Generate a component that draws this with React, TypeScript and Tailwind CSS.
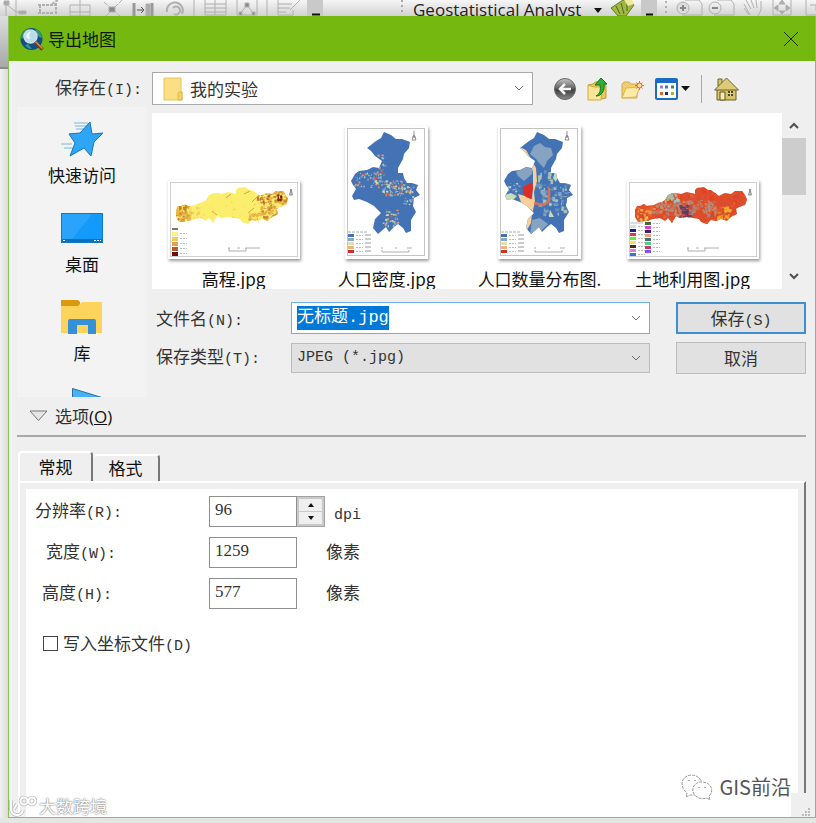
import { useEffect, useRef, useState, type ReactNode } from 'react'

const WIDE_OUTLINE =
  'M8 30 L10 26 L13 26 L17 24 L20 26 L27 25 L31 23 L35 22 L38 20 L41 15 L46 13 L50 13 L54 14 L60 12 L68 14 L68 10 L70 8 L77 7 L81 10 L84 10 L88 13 L92 16 L98 13 L104 14 L108 11 L115 11 L118 15 L120 19 L118 25 L112 27 L109 29 L110 34 L104 37 L100 41 L94 39 L89 41 L84 40 L80 44 L74 42 L72 39 L66 38 L60 37 L53 38 L49 36 L45 43 L41 38 L38 41 L33 38 L26 39 L20 41 L11 42 L8 37 Z'
const TALL_OUTLINE =
  'M39 6 L46 9 L51 13 L57 13 L65 16 L64 22 L59 28 L58 33 L53 42 L53 47 L58 47 L59 52 L62 57 L67 57 L73 59 L71 64 L75 69 L69 72 L68 80 L71 86 L66 94 L66 105 L61 107 L58 102 L53 98 L49 101 L44 106 L41 101 L33 108 L28 102 L30 93 L36 87 L29 80 L22 76 L14 73 L9 74 L7 70 L11 63 L8 59 L6 55 L10 48 L14 45 L22 44 L28 41 L34 42 L37 35 L30 30 L26 25 L22 22 L31 15 L36 12 Z'

type Spot = { x: number; y: number; w: number; h: number; color: string }

function scatter(seed: number, count: number, box: number[], size: number, colors: string[]): Spot[] {
  let s = seed * 7919
  const next = () => {
    s = (s * 16807) % 2147483647
    return s / 2147483647
  }
  return Array.from({ length: count }, () => ({
    x: box[0] + next() * box[2],
    y: box[1] + next() * box[3],
    w: 0.8 + next() * size,
    h: 0.8 + next() * size,
    color: colors[Math.floor(next() * colors.length)],
  }))
}

const DENSITY = ['#e8dcae', '#f0a070', '#9fb8c4', '#d9653d', '#c9d8b0', '#4473b5', '#86a9c8']
const SPOTS = {
  elevation: [
    ...scatter(11, 80, [7, 24, 14, 18], 3, ['#d99a35', '#e9b64f', '#c77a25', '#e2a83f']),
    ...scatter(19, 25, [18, 26, 14, 14], 3, ['#e9b64f', '#f6d960']),
    ...scatter(23, 170, [92, 10, 28, 32], 3, ['#e0a040', '#d08a32', '#e8b450', '#c8782a']),
    ...scatter(29, 30, [80, 32, 14, 12], 3, ['#e9b64f', '#d99a35']),
    ...scatter(31, 24, [30, 22, 60, 18], 2, ['#f4cf58', '#fbe36a']),
    ...scatter(71, 18, [88, 14, 12, 8], 2, ['#a8541c', '#c0702a']),
    ...scatter(37, 12, [108, 14, 6, 5], 2, ['#6b1208', '#8b2b10']),
  ],
  density: [
    ...scatter(41, 110, [36, 54, 22, 15], 2, DENSITY),
    ...scatter(43, 70, [8, 46, 27, 15], 2, DENSITY),
    ...scatter(47, 30, [31, 28, 8, 26], 2, DENSITY),
    ...scatter(53, 36, [37, 82, 16, 18], 2, DENSITY),
    ...scatter(59, 26, [58, 60, 10, 18], 2, DENSITY),
  ],
  count: [
    ...scatter(61, 120, [38, 44, 36, 44], 4, ['#8aa9c0', '#6f96bd', '#4473b5', '#9db8bd', '#5d86ba', '#b9cdb8']),
    ...scatter(67, 16, [8, 56, 14, 12], 3, ['#c9dcb8', '#8aa9c0', '#5d86ba']),
  ],
  landuse: [
    ...scatter(73, 260, [6, 6, 115, 38], 4, ['#e2401f', '#f0532a', '#d6452f', '#e9652c', '#d9533c']),
    ...scatter(79, 150, [22, 20, 66, 14], 3, ['#a98b7c', '#c98d6a', '#9c8f8c', '#c8976c', '#b5797e']),
    ...scatter(83, 36, [36, 10, 14, 10], 3, ['#8ecfd4', '#a5c7b0', '#c9b46a']),
    ...scatter(89, 34, [52, 24, 12, 12], 3, ['#6a3564', '#8b4a6e', '#4d3b68', '#b05a45']),
    ...scatter(97, 26, [90, 26, 12, 12], 3, ['#f2a72b', '#f5b431']),
    ...scatter(101, 24, [10, 28, 12, 12], 3, ['#f0a23a', '#e5cf5a', '#e2682f']),
  ],
}

function Spots({ spots }: { spots: Spot[] }) {
  return (
    <>
      {spots.map((s, i) => (
        <rect key={i} x={s.x} y={s.y} width={s.w} height={s.h} fill={s.color} rx="0.8" opacity="0.85" />
      ))}
    </>
  )
}

function Legend({ x, y, step, colors }: { x: number; y: number; step: number; colors: string[] }) {
  return (
    <>
      {colors.map((c, i) => (
        <g key={i}>
          <rect x={x} y={y + i * step} width="6" height={step - 1} fill={c} />
          <path d={`M${x + 8} ${y + i * step + 1.5}h7`} stroke="#bbb" strokeDasharray="2 1" />
        </g>
      ))}
    </>
  )
}

function WideMap({ kind }: { kind: 'elevation' | 'landuse' }) {
  const elevation = kind === 'elevation'
  return (
    <svg width="132" height="79" viewBox="0 0 132 79" aria-hidden="true">
      <rect x="2.5" y="2.5" width="127" height="74" fill="none" stroke="#cfcfcf" />
      <clipPath id={kind}>
        <path d={WIDE_OUTLINE} />
      </clipPath>
      <g clipPath={`url(#${kind})`}>
        <rect width="132" height="79" fill={elevation ? '#fbee6c' : '#dd4d2b'} />
        <Spots spots={SPOTS[kind]} />
        {elevation && (
          <path d="M84 22l7-7M58 18l5-4M76 14l6-3M80 33l6-5M44 31l5 4" stroke="#dba03a" />
        )}
      </g>
      <path d="M123 15V9M121.5 15l1.5-6 1.5 6z" stroke="#777" strokeWidth="0.8" fill="none" />
      {elevation ? (
        <>
          <path d="M4 49h6" stroke="#777" strokeWidth="2" />
          <Legend x={4} y={52} step={5} colors={['#fdf27d', '#f5c95c', '#e4a04a', '#b35c25', '#6e0f12']} />
        </>
      ) : (
        <>
          <path d="M3 43h13" stroke="#bbb" />
          <Legend x={3} y={45} step={4} colors={['#c5e6ea', '#1c1c9c', '#e23b2e', '#5cf23a', '#eee25c', '#4a2a18', '#e27fd0', '#3c76c8']} />
          <Legend x={18} y={42} step={4} colors={['#3f6b35', '#d93fe0', '#4a1c5c', '#e0a28a', '#4f6f66', '#4fce8a', '#c43a72', '#8a4ff0']} />
        </>
      )}
      <path d="M61 68v3h17v-3M60 68h2M69 68h3M77 68h15" stroke="#9a9a9a" strokeWidth="0.8" fill="none" />
    </svg>
  )
}

function TallMap({ kind }: { kind: 'density' | 'count' }) {
  return (
    <svg width="83" height="133" viewBox="0 0 83 133" aria-hidden="true">
      <rect x="2.5" y="2.5" width="77" height="127" fill="none" stroke="#c4c4c4" />
      <clipPath id={kind}>
        <path d={TALL_OUTLINE} />
      </clipPath>
      <g clipPath={`url(#${kind})`}>
        <rect width="83" height="133" fill="#4473b5" />
        {kind === 'count' && (
          <>
            <path d="M36 20l6-3 5 4 6 1 2 7-6 6-3 7-4-4-4-5-6-5z" fill="#86a3c2" />
            <path d="M18 46l10-5 7 2-1 5-8 7-6-5z" fill="#86a3c2" />
            <path d="M34 94l8-2 8 6-8 8-10 3z" fill="#86a3c2" />
          </>
        )}
        <Spots spots={SPOTS[kind]} />
        {kind === 'count' && (
          <>
            <path d="M22 21 L28 24 L33 33 L38 42 L39 55 L36 66 L37 76 L34 88 L33 97 L29 104 L26 100 L30 90 L34 84 L24 79 L20 68 L27 70 L34 73 L35 60 L35 45 L29 32 Z" fill="#f8cf9b" />
            <path d="M25 61 L34 56 L35 62 L33 73 L28 71 L25 67 Z" fill="#dd2d26" />
            <path d="M36 77l10 2 5-4V62" stroke="#dc7057" strokeWidth="2.5" fill="none" />
            <path d="M7 69l6-2 6 3-5 5-7-1zM52 84l4 7h-5zM57 46l3 4-2 6-3-4z" fill="#c9dcb8" />
          </>
        )}
      </g>
      <path d="M69 10V5M67 14l2-5 2 5zM67 11h4" stroke="#777" strokeWidth="0.8" fill="none" />
      <path d="M3 106h20" stroke="#aaa" strokeDasharray="3 1" />
      <Legend x={3} y={108} step={4} colors={['#4473b5', '#86a9c8', '#e2e2b0', '#f3b37c', '#d42c2c']} />
      <path d="M23 108v19" stroke="#ccc" strokeWidth="6" strokeDasharray="2 2" />
      <path d="M37 124v2h27v-2M36 122h2M50 122h2M62 122h5" stroke="#9a9a9a" strokeWidth="0.8" fill="none" />
    </svg>
  )
}

const FILES = [
  { name: '高程.jpg', picture: <WideMap kind="elevation" /> },
  { name: '人口密度.jpg', picture: <TallMap kind="density" /> },
  { name: '人口数量分布图.', picture: <TallMap kind="count" /> },
  { name: '土地利用图.jpg', picture: <WideMap kind="landuse" /> },
]

function Chevron({ up = false, bold = false }: { up?: boolean; bold?: boolean }) {
  return (
    <svg width="10" height="7" viewBox="0 0 10 7" fill="none" aria-hidden="true" className="pointer-events-none">
      <path d={up ? 'M1 6l4-4 4 4' : 'M1 1l4 4 4-4'} stroke={bold ? '#505050' : '#6b6b6b'} strokeWidth={bold ? 2 : 1} />
    </svg>
  )
}

// 括号里的快捷键，半角等宽
function Key({ children }: { children: ReactNode }) {
  return <span className="font-['Liberation_Mono',monospace] text-[15px] leading-none">{children}</span>
}

function BackgroundToolbar() {
  return (
    <div aria-hidden="true" className="flex h-4 items-start overflow-hidden bg-gradient-to-b from-[#f6f6f6] to-[#d2d2d2]">
      <svg width="400" height="16" viewBox="0 0 400 16" fill="none" stroke="#b0b0b0" className="shrink-0">
        <path d="M6 3v13M6 4l10 8M16 0v16M16 12h10" />
        <path d="M4 1h5v4H4zM19 11h7v3h-7z" fill="#aaa" />
        <path d="M38 5h18M40 5v9M38 13h16M56 3v11M52 4l6-4" strokeDasharray="3 1" strokeWidth="2" />
        <path d="M70 5h20v11H70zM80 0v16M70 12h20" />
        <path d="M106 16l16-16M104 2l16 14" strokeDasharray="5 1" />
        <path d="M109 7h6v5h-6z" fill="#888" />
        <path d="M134 3v13M152 3v13" strokeWidth="3" stroke="#999" />
        <path d="M137 10h7M141 7l3 3-3 3" stroke="#555" />
        <path d="M146 4h4v12h-4z" fill="#aaa" />
        <path d="M167 12a8 8 0 1 1 15 2M174 14a4 4 0 1 0-1-6" strokeWidth="2" />
        <path d="M194 0v16M267 0v16" />
        <path d="M205 0v15h21V0M205 4h21M205 8h21M205 12h21M215 0v15" />
        <path d="M237 0v15h20V0M240 14l7-9 7 9" />
        <path d="M245 3h4v4h-4zM239 12h3v3h-3zM252 12h3v3h-3z" fill="#888" />
        <path d="M278 0v15h15v-5M278 4h14M278 8h12M278 12h8M290 10l10-10" />
        <path d="M307 0h16v16h-16z" fill="#c9c9c9" stroke="none" />
        <path d="M312 14.500h8" stroke="#111" strokeWidth="2" />
      </svg>
      <svg width="13" height="16" viewBox="0 0 13 16" className="shrink-0" fill="#aaa">
        <path d="M1 0h2v2H1zM1 5h2v2H1zM1 10h2v2H1z" />
      </svg>
      <span className="w-[167px] shrink-0 whitespace-nowrap font-['Open_Sans',sans-serif] text-[17px] leading-5 text-[#222]">
        Geostatistical Analyst
      </span>
      <svg width="236" height="16" viewBox="0 0 236 16" fill="none" stroke="#b0b0b0" className="shrink-0">
        <path d="M14 8h8l-4 5z" fill="#111" stroke="none" />
        <path d="M31 8l12-8 11 5-8 11h-8z" fill="#a2b746" stroke="#647b1e" />
        <path d="M36 6l4 8M41 3l3 11M47 2v9" stroke="#4c661b" />
        <path d="M44 0h8l2 4-6 2z" fill="#f0e89a" stroke="none" />
        <path d="M61 0h16v16H61z" fill="#c9c9c9" stroke="none" />
        <path d="M66 14.500h7" stroke="#111" strokeWidth="2" />
        <path d="M86 1v13" strokeWidth="2" strokeDasharray="2 3" />
        <path d="M105 0h14l3 4v11h-20M137 0h14l3 4v11h-20" />
        <circle cx="103" cy="8" r="6" fill="#ddd" />
        <path d="M100 8h6M103 5v6M132 8h6" strokeWidth="2" stroke="#888" />
        <circle cx="135" cy="8" r="6" />
        <path d="M164 4l6 11M166 0l5 9M171 0l3 8M176 0l1 8M181 1v9l-3 6M164 8l5 7" />
        <path d="M193 0v15h18V0" />
        <path d="M202 0l3 4h-6zM202 14l3-3h-6zM194 8l4-3v6zM210 8l-4-3v6z" fill="#aaa" />
        <path d="M226 0v15h10M230 5h6v6" />
      </svg>
    </div>
  )
}

function TitleBar() {
  return (
    <header className="flex h-[45px] items-center bg-[#75b80f] pr-4 pl-[11px]">
      <svg width="24" height="24" viewBox="0 0 24 24" aria-hidden="true">
        <circle cx="11.500" cy="12" r="11" fill="#124f86" />
        <path d="M1 12a11 11 0 0 1 7-10l2 2-3 5-4 2zM5 18l3-1 4 5c-3 0-6-2-7-4zM15 2c4 1 7 5 7 9l-3-1-3-4z" fill="#2e9a8a" />
        <circle cx="10.500" cy="9.500" r="6.500" fill="#b8dcec" stroke="#cfdfe6" strokeWidth="1.500" />
        <path d="M6 9a5 5 0 0 1 5-4c-2 2-2 4-1 7-2 0-4-1-4-3z" fill="#e8f7fb" />
        <path d="M15 15l7.500 7.500" stroke="#7a3c18" strokeWidth="3.500" />
        <path d="M15.500 14.500l7 7" stroke="#d98c4c" strokeWidth="1.500" />
      </svg>
      <h1 className="ml-1 flex-1 text-[17px] leading-6 text-[#0c1a05]">导出地图</h1>
      <button type="button" aria-label="关闭">
        <svg width="16" height="16" viewBox="0 0 16 16" stroke="#1c2d08">
          <path d="M1 1l14 14M15 1L1 15" />
        </svg>
      </button>
    </header>
  )
}

function FolderTools() {
  return (
    <div className="flex h-8 shrink-0 items-center">
      <button type="button" aria-label="后退" className="w-[34px]">
        <svg width="24" height="24" viewBox="0 0 24 24">
          <defs>
            <linearGradient id="ball" x2="0" y2="1">
              <stop stopColor="#c6c6c6" />
              <stop offset="0.45" stopColor="#656565" />
              <stop offset="0.55" stopColor="#3f3f3f" />
              <stop offset="1" stopColor="#8c8c8c" />
            </linearGradient>
          </defs>
          <circle cx="12" cy="12" r="10.500" fill="url(#ball)" stroke="#666" />
          <path d="M18 12H8M12 7l-5 5 5 5" fill="none" stroke="#f4f4f4" strokeWidth="2.500" />
        </svg>
      </button>
      <button type="button" aria-label="上一级" className="w-[34px]">
        <svg width="22" height="24" viewBox="0 0 22 24">
          <path d="M1 8l5-1 2-2h9l2 3v13l-4 1z" fill="#e9c75c" stroke="#c59b34" />
          <path d="M1 8l6 2h8l-1 13H1z" fill="#fbe596" stroke="#d1aa45" />
          <path d="M9 19c4-2 5-6 4-11H8l6-7 6 6h-3c1 6-2 12-8 12z" fill="#2eae35" stroke="#13761c" />
        </svg>
      </button>
      <button type="button" aria-label="新建文件夹" className="w-[34px]">
        <svg width="24" height="24" viewBox="0 0 24 24">
          <path d="M1 7l2-2h5l2 2h6v14H1z" fill="#efcf6d" stroke="#d2aa49" />
          <path d="M1 21l4-10 14-1-4 10z" fill="#fdeaa6" stroke="#dcb452" />
          <path d="M18.500 4v9M14 8.500h9M15.500 5.500l6 6M21.500 5.500l-6 6" stroke="#f0683a" />
          <circle cx="18.500" cy="8.500" r="2.500" fill="#ffd9a0" stroke="#f0632b" />
        </svg>
      </button>
      <button type="button" aria-label="视图" className="flex w-[46px] items-center gap-[3px]">
        <svg width="23" height="22" viewBox="0 0 23 22">
          <rect x="1" y="1" width="21" height="20" rx="1" fill="#fff" stroke="#1c6cc4" strokeWidth="2" />
          <path d="M1 1h21v4H1z" fill="#1c6cc4" />
          <path d="M5 7.500h3v3H5z" fill="#8e86c8" />
          <path d="M10 7.500h3v3h-3z" fill="#3b77d0" />
          <path d="M16 7.500h3v3h-3z" fill="#2c9448" />
          <path d="M5 14h3v3H5z" fill="#e0662b" />
          <path d="M10 14h3v3h-3z" fill="#202f7c" />
          <path d="M16 14h3v3h-3z" fill="#c0a52a" />
        </svg>
        <svg width="9" height="5" viewBox="0 0 9 5">
          <path d="M0 0h9L4.500 5z" fill="#111" />
        </svg>
      </button>
      <span className="mr-3 h-7 w-px bg-[#a8a8a8]" />
      <button type="button" aria-label="主页">
        <svg width="25" height="24" viewBox="0 0 25 24">
          <path d="M4 2h4v7H4z" fill="#d8c56c" stroke="#6f6225" />
          <path d="M3 12h19v11H3z" fill="#d6c268" stroke="#6f6225" />
          <path d="M0.500 13L12.500 1l12 12z" fill="#dccb78" stroke="#6f6225" />
          <path d="M6 15h5v8H6z" fill="#f4eab2" stroke="#62551b" />
          <path d="M14 14h5v5h-5z" fill="#4a4a30" />
          <path d="M16.500 14v5M14 16.500h5" stroke="#e4d58a" />
        </svg>
      </button>
    </div>
  )
}

const PLACES = [
  {
    name: '快速访问',
    icon: (
      <svg width="44" height="36" viewBox="0 0 44 36">
        <path d="M14 2h14M15 5h12M16 8h11M1 23h11M4 27h9M9 13h8" stroke="#54a7dd" strokeWidth="0.8" />
        <path d="M30 1l2 12 11-1-9 9-3 14-7-8-14 8 5-13-6-9 11-1z" fill="#2ea5f5" stroke="#1577bd" />
      </svg>
    ),
  },
  {
    name: '桌面',
    icon: (
      <svg width="42" height="36" viewBox="0 0 42 36">
        <rect x="0.5" y="3.5" width="41" height="29" fill="#149afa" stroke="#0d78cc" />
        <path d="M1 4h30L11 29H1z" fill="#38acfc" opacity="0.6" />
        <path d="M1 29h40v3H1z" fill="#0b6fbe" />
        <path d="M2 30.500h2M33 30.500h2M36 30.500h2M39 30.500h1" stroke="#fff" />
      </svg>
    ),
  },
  {
    name: '库',
    icon: (
      <svg width="42" height="36" viewBox="0 0 42 36">
        <path d="M0 1h17l2 2v4H0z" fill="#d99b0c" />
        <path d="M0 7h17l4-4h20v31H0z" fill="#fdd35c" />
        <path d="M7 35V22q0-2 2-2h24q2 0 2 2v13h-8v-9H16v9z" fill="#3490d9" />
      </svg>
    ),
  },
]

function PlacesBar() {
  return (
    <nav className="flex h-[290px] w-[130px] shrink-0 flex-col gap-[23px] overflow-hidden bg-[#f3f3f3] pt-[14px]">
      {PLACES.map(place => (
        <button key={place.name} type="button" className="flex shrink-0 flex-col items-center gap-[6px] text-[17px] leading-6">
          <span className="flex h-9">{place.icon}</span>
          {place.name}
        </button>
      ))}
      <button type="button" aria-label="此电脑" className="shrink-0 pl-[55px]">
        <svg width="40" height="30" viewBox="0 0 40 30">
          <path d="M0.500 0.500L38 12v17H0.500z" fill="#45b3f5" stroke="#2d6f9c" />
        </svg>
      </button>
    </nav>
  )
}

function FileList() {
  return (
    <div className="flex h-[176px]">
      <ul className="flex min-w-0 flex-1 overflow-hidden bg-white pl-[5px]">
        {FILES.map(file => (
          <li key={file.name} className="flex w-[153px] shrink-0 flex-col items-center justify-end text-[17px] leading-5">
            <span className="bg-white shadow-[1px_2px_3px_rgba(0,0,0,0.4)]">{file.picture}</span>
            <span className="mt-[10px] whitespace-nowrap">{file.name}</span>
          </li>
        ))}
      </ul>
      <div className="flex w-6 flex-col items-center">
        <button type="button" aria-label="向上滚动" className="flex h-[25px] items-center">
          <Chevron up bold />
        </button>
        <div className="h-[57px] w-full bg-[#cdcdcd]" />
        <button type="button" aria-label="向下滚动" className="mt-auto flex h-[26px] items-center">
          <Chevron bold />
        </button>
      </div>
    </div>
  )
}

function NameFields() {
  const nameInput = useRef<HTMLInputElement>(null)
  const [name, setName] = useState('无标题.jpg')

  useEffect(() => {
    nameInput.current?.focus()
    nameInput.current?.select()
  }, [])

  return (
    <div className="mt-[13px] flex flex-col gap-2 text-[#333]">
      <div className="flex h-8 items-center">
        <label htmlFor="file-name" className="w-[139px] shrink-0 pl-1">
          文件名<Key>(N):</Key>
        </label>
        <div className="flex h-8 min-w-0 flex-1 items-center border border-[#6fb0e4] bg-white pr-2 pl-[5px]">
          <input
            ref={nameInput}
            id="file-name"
            value={name}
            onChange={e => setName(e.target.value)}
            className="h-6 min-w-0 flex-1 font-['Liberation_Mono','Noto_Sans_CJK_SC',monospace] leading-6 caret-transparent outline-none selection:bg-[#0078d7] selection:text-white"
          />
          <Chevron />
        </div>
        <button type="submit" className="ml-[26px] h-8 w-[130px] shrink-0 border-2 border-[#3d8fd1] bg-[#e1e1e1]">
          保存<Key>(S)</Key>
        </button>
      </div>
      <div className="flex h-8 items-center">
        <label htmlFor="file-type" className="w-[139px] shrink-0 pb-1 pl-1">
          保存类型<Key>(T):</Key>
        </label>
        <div className="flex h-[30px] min-w-0 flex-1 items-center border border-[#bcbcbc] bg-[#e1e1e1] pr-2 pl-[5px]">
          <select
            id="file-type"
            className="min-w-0 flex-1 appearance-none font-['Liberation_Mono',monospace] text-[15px] outline-none"
          >
            <option>JPEG (*.jpg)</option>
          </select>
          <Chevron />
        </div>
        <button type="button" className="ml-[26px] h-8 w-[130px] shrink-0 border border-[#bcbcbc] bg-[#e1e1e1]">
          取消
        </button>
      </div>
    </div>
  )
}

function Spinner() {
  return (
    <span className="flex h-[31px] w-7 flex-col gap-px border border-l-0 border-[#a3a3a3] bg-[#c9c9c9] p-0.5">
      <button type="button" aria-label="增加" className="flex flex-1 items-center justify-center bg-[#efefef]">
        <svg width="6" height="4" viewBox="0 0 6 4"><path d="M0 4h6L3 0z" fill="#111" /></svg>
      </button>
      <button type="button" aria-label="减少" className="flex flex-1 items-center justify-center bg-[#efefef]">
        <svg width="6" height="4" viewBox="0 0 6 4"><path d="M0 0h6L3 4z" fill="#111" /></svg>
      </button>
    </span>
  )
}

function GeneralPage() {
  const box = "h-[31px] w-[88px] border border-[#8f8f8f] bg-white px-[5px] pb-1 font-['Liberation_Serif',serif] outline-none"
  return (
    <div className="flex-1 bg-white pt-[7px] pl-2">
      <div className="flex flex-col gap-[10px]">
        <div className="flex h-[31px] items-center">
          <label htmlFor="dpi" className="w-[175px] pb-1 pl-px">分辨率<Key>(R):</Key></label>
          <input id="dpi" defaultValue="96" className={box} />
          <Spinner />
          <span className="ml-[9px]"><Key>dpi</Key></span>
        </div>
        <div className="flex h-[31px] items-center">
          <label htmlFor="width" className="w-[175px] pb-1 pl-3">宽度<Key>(W):</Key></label>
          <input id="width" defaultValue="1259" className={box} />
          <span className="ml-[29px] pb-1">像素</span>
        </div>
        <div className="flex h-[31px] items-center">
          <label htmlFor="height" className="w-[175px] pb-1 pl-2">高度<Key>(H):</Key></label>
          <input id="height" defaultValue="577" className={box} />
          <span className="ml-[29px] pb-1">像素</span>
        </div>
      </div>
      <label className="mt-[22px] flex items-center gap-[5px] pl-[9px]">
        <input type="checkbox" className="size-[15px] appearance-none border border-[#444] bg-white checked:bg-[#0078d7]" />
        <span>写入坐标文件<Key>(D)</Key></span>
      </label>
    </div>
  )
}

function Watermarks() {
  return (
    <>
      <div className="absolute right-6 bottom-[14px] flex items-center gap-[6px] text-[20px] leading-8 text-[#555]">
        <svg width="32" height="28" viewBox="0 0 32 28" fill="#fff" stroke="#999" strokeDasharray="3 1">
          <path d="M6 20l-1 4 4-2c9 1 15-5 12-12C18-1 2 0 1 10c0 4 2 8 5 10z" />
          <path d="M26 25l3 2-1-4c5-4 3-13-6-14-10-1-14 10-6 15 3 2 7 2 10 1z" />
          <path d="M8 7v1M14 7v1M18 14v1M24 14v1" stroke="#555" />
        </svg>
        GIS前沿
      </div>
      <div className="absolute -bottom-px left-0 flex items-center gap-0.5 text-[17px] leading-6 text-white [text-shadow:0_0_2px_#777,0_0_1px_#888]">
        <svg width="28" height="22" viewBox="0 0 28 22" fill="none">
          <g stroke="#bbb" strokeWidth="3.5">
            <path d="M2 5v8a6 6 0 0 0 12 2M8 9l-3 5" />
            <circle cx="15" cy="6" r="3.5" />
            <circle cx="23" cy="6" r="3.5" />
          </g>
          <g stroke="#fff" strokeWidth="2">
            <path d="M2 5v8a6 6 0 0 0 12 2M8 9l-3 5" />
            <circle cx="15" cy="6" r="3.5" />
            <circle cx="23" cy="6" r="3.5" />
          </g>
        </svg>
        大数跨境
      </div>
    </>
  )
}

export default function App() {
  return (
    <div className="flex min-h-screen flex-col bg-[#e4e6e4] font-['Noto_Sans_CJK_SC',sans-serif] text-[17px] leading-6 text-[#111]">
      <BackgroundToolbar />
      <div className="flex flex-1 pb-[5px]">
        <div aria-hidden="true" className="w-2 shrink-0 bg-gradient-to-r from-[#f0f1f0] to-[#dadcda]">
          <div className="h-[53px] border-b-2 border-[#8c8c8c] bg-gradient-to-b from-[#dedede] to-[#a8a8a8]" />
        </div>
        <form
          onSubmit={e => e.preventDefault()}
          className="relative flex min-w-0 flex-1 flex-col border border-t-0 border-[#8cc152] bg-[#efefef]"
        >
          <TitleBar />

          <div className="flex flex-col pr-[9px] pl-2 text-[#333]">
            <div className="flex items-center pt-[11px] pb-0.5">
              <label htmlFor="folder" className="w-[135px] shrink-0 pr-[10px] pb-1 text-right">
                保存在<Key>(I):</Key>
              </label>
              <div className="flex h-[33px] min-w-0 flex-1 items-center border border-[#a9a9a9] bg-white pr-2 pl-[10px]">
                <svg width="20" height="24" viewBox="0 0 20 24" aria-hidden="true">
                  <path d="M1 1h17v13l1 1v8H1z" fill="#fbdf84" stroke="#e8c35c" />
                  <path d="M15 23v-6l1-2h3v8z" fill="#f6d268" stroke="#dfb64c" />
                </svg>
                <select id="folder" className="ml-[7px] min-w-0 flex-1 appearance-none outline-none">
                  <option>我的实验</option>
                </select>
                <Chevron />
              </div>
              <div className="mr-[67px] ml-5">
                <FolderTools />
              </div>
            </div>

            <div className="flex gap-[5px] text-[#111]">
              <PlacesBar />
              <div className="min-w-0 flex-1 pt-[6px]">
                <FileList />
                <NameFields />
              </div>
            </div>

            <button type="button" className="flex h-10 items-center gap-[6px] border-b-2 border-[#a9a9a9] pl-3">
              <svg width="20" height="12" viewBox="0 0 20 12" fill="#e4e4e4" stroke="#777" aria-hidden="true">
                <path d="M1 1h17L9.500 10.500z" />
              </svg>
              <span>
                选项<span className="font-['Open_Sans',sans-serif] text-[17px] text-[#111]">(<u>O</u>)</span>
              </span>
            </button>
          </div>

          <div role="tablist" className="mt-[14px] flex items-end pl-[9px] text-[#111]">
            <button type="button" role="tab" aria-selected="true" className="h-[30px] w-[75px] rounded-t-sm border-t-2 border-r-2 border-l-2 border-t-white border-r-[#777] border-l-white">
              常规
            </button>
            <button type="button" role="tab" aria-selected="false" className="h-[27px] w-[67px] rounded-t-sm border-t-2 border-r-2 border-t-white border-r-[#777] pb-0.5">
              格式
            </button>
          </div>
          <div className="flex flex-1 pl-[9px] text-[#333]">
            <div className="flex flex-1 border-t-2 border-l-2 border-white pt-[6px] pl-[6px]">
              <GeneralPage />
            </div>
            <div className="flex w-[17px] flex-col">
              <div className="w-2 flex-1 border-t-2 border-r-2 border-t-white border-r-[#777]" />
              <div className="relative h-6">
                <svg width="24" height="24" viewBox="0 0 24 24" aria-hidden="true" className="absolute right-0 bottom-0">
                  <path d="M0 0h24v24H0z" fill="#efefef" />
                  <path d="M17 15h2v2h-2zM17 18h2v2h-2zM14 18h2v2h-2zM17 21h2v2h-2zM14 21h2v2h-2zM11 21h2v2h-2z" fill="#bbb" />
                </svg>
              </div>
            </div>
          </div>
          <Watermarks />
        </form>
      </div>
    </div>
  )
}
